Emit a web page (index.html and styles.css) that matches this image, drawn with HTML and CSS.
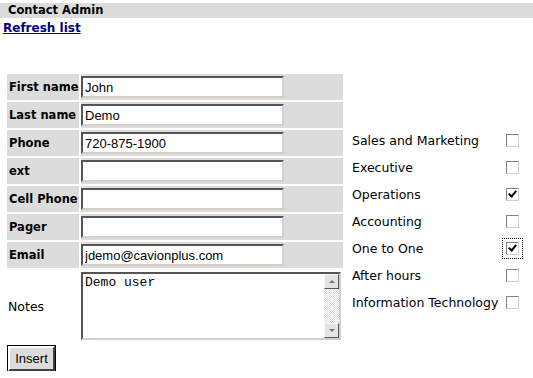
FILE: index.html
```html
<!DOCTYPE html>
<html lang="en">

<head>
    <meta charset="UTF-8">
    <title>Contact Admin</title>
    <link rel="stylesheet" href="styles.css">
</head>

<body>
    <div class="titlebar">Contact Admin</div>
    <a href="#" class="refresh">Refresh list</a>

    <div class="main">
        <!-- contact fields -->
        <table class="form">
            <tr>
                <th>First name</th>
                <td><input type="text" value="John"></td>
            </tr>
            <tr>
                <th>Last name</th>
                <td><input type="text" value="Demo"></td>
            </tr>
            <tr>
                <th>Phone</th>
                <td><input type="text" value="720-875-1900"></td>
            </tr>
            <tr>
                <th>ext</th>
                <td><input type="text" value=""></td>
            </tr>
            <tr>
                <th>Cell Phone</th>
                <td><input type="text" value=""></td>
            </tr>
            <tr>
                <th>Pager</th>
                <td><input type="text" value=""></td>
            </tr>
            <tr>
                <th>Email</th>
                <td><input type="text" value="jdemo@cavionplus.com"></td>
            </tr>
            <tr class="notes-row">
                <th class="notes-label">Notes</th>
                <td>
                    <div class="notes">
                        <textarea>Demo user</textarea>
                        <div class="scroll">
                            <span class="arrow up"></span>
                            <span class="track"></span>
                            <span class="arrow down"></span>
                        </div>
                    </div>
                </td>
            </tr>
        </table>

        <!-- groups -->
        <table class="groups">
            <tr>
                <td>Sales and Marketing</td>
                <td><span class="box"></span></td>
            </tr>
            <tr>
                <td>Executive</td>
                <td><span class="box"></span></td>
            </tr>
            <tr>
                <td>Operations</td>
                <td><span class="box checked"></span></td>
            </tr>
            <tr>
                <td>Accounting</td>
                <td><span class="box"></span></td>
            </tr>
            <tr>
                <td>One to One</td>
                <td><span class="box checked focus"></span></td>
            </tr>
            <tr>
                <td>After hours</td>
                <td><span class="box"></span></td>
            </tr>
            <tr>
                <td>Information Technology</td>
                <td><span class="box"></span></td>
            </tr>
        </table>
    </div>

    <button class="insert">Insert</button>
</body>

</html>
```

FILE: styles.css
```css
* {
    margin: 0;
    padding: 0;
    box-sizing: border-box;
}

body {
    padding-top: 3px;
    font-family: "DejaVu Sans", Verdana, sans-serif;
    font-size: 12px;
    color: #000;
    background: #fff;
}

.titlebar {
    height: 15px;
    line-height: 15px;
    padding-left: 8px;
    background-color: #dcdcdc;
    font-size: 11.5px;
    font-weight: bold;
}

.refresh {
    display: inline-block;
    margin: 2px 0 0 3px;
    font-weight: bold;
    color: #000080;
    line-height: 16px;
}

.main {
    display: flex;
    align-items: flex-start;
    margin: 36px 0 0 5px;
}

.form {
    border-spacing: 2px;
}

.form th,
.form td {
    height: 26px;
    padding: 0;
    background-color: #dcdcdc;
    vertical-align: middle;
    text-align: left;
}

.form th {
    width: 72px;
    padding-left: 2px;
    font-size: 11.5px;
    white-space: nowrap;
}

.form td {
    width: 262px;
}

.form input {
    display: block;
    width: 203px;
    height: 22px;
    padding: 0 2px;
    border: 2px solid;
    border-color: #555 #d4d0c8 #d4d0c8 #555;
    font-family: "Liberation Sans", Arial, sans-serif;
    font-size: 13px;
    outline: none;
}

.form .notes-row th,
.form .notes-row td {
    background: none;
    height: 72px;
}

.form .notes-label {
    padding-left: 1px;
    font-size: 12.5px;
    font-weight: normal;
}

.notes {
    display: flex;
    width: 260px;
    height: 68px;
    border: 2px solid;
    border-color: #555 #d4d0c8 #d4d0c8 #555;
    background: #fff;
}

.notes textarea {
    flex: 1;
    min-width: 0;
    border: none;
    resize: none;
    outline: none;
    padding: 1px 2px;
    font-family: "Liberation Mono", "Courier New", monospace;
    font-size: 13px;
    overflow: hidden;
}

.scroll {
    width: 15px;
    display: flex;
    flex-direction: column;
}

.scroll .arrow {
    display: flex;
    align-items: center;
    justify-content: center;
    height: 15px;
    background: #e4e4e4;
    border: 1px solid;
    border-color: #f4f4f4 #555 #555 #f4f4f4;
}

.scroll .arrow::after {
    content: "";
    border: 3px solid transparent;
}

.scroll .up::after {
    border-bottom-color: #777;
    margin-top: -3px;
}

.scroll .down::after {
    border-top-color: #777;
    margin-bottom: -3px;
}

.scroll .track {
    flex: 1;
    background: repeating-conic-gradient(#fff 0 25%, #dcdcdc 0 50%) 0 0 / 2px 2px;
}

.groups {
    margin-top: 54px;
    border-spacing: 0 2px;
}

.groups td {
    height: 25px;
    padding: 0;
    vertical-align: middle;
    white-space: nowrap;
}

.groups td:first-child {
    padding-left: 7px;
    font-size: 12.5px;
}

.groups td:last-child {
    width: 27px;
    padding-left: 8px;
}

.box {
    display: block;
    position: relative;
    width: 13px;
    height: 13px;
    border: 1px solid;
    border-color: #808080 #d4d0c8 #d4d0c8 #808080;
    background: #fff;
}

/* check mark */
.box.checked::after {
    content: "";
    position: absolute;
    left: 3px;
    top: 0px;
    width: 3px;
    height: 6px;
    border: solid #000;
    border-width: 0 2px 2px 0;
    transform: rotate(40deg);
}

.box.focus {
    outline: 1px dotted #000;
    outline-offset: 3px;
}

.insert {
    display: block;
    margin: 2px 0 0 8px;
    width: 47px;
    height: 25px;
    font-family: "Liberation Sans", Arial, sans-serif;
    font-size: 13px;
    background: #dcdcdc;
    border: 2px solid;
    border-color: #fff #404040 #404040 #fff;
    outline: 1px solid #000;
}
```
